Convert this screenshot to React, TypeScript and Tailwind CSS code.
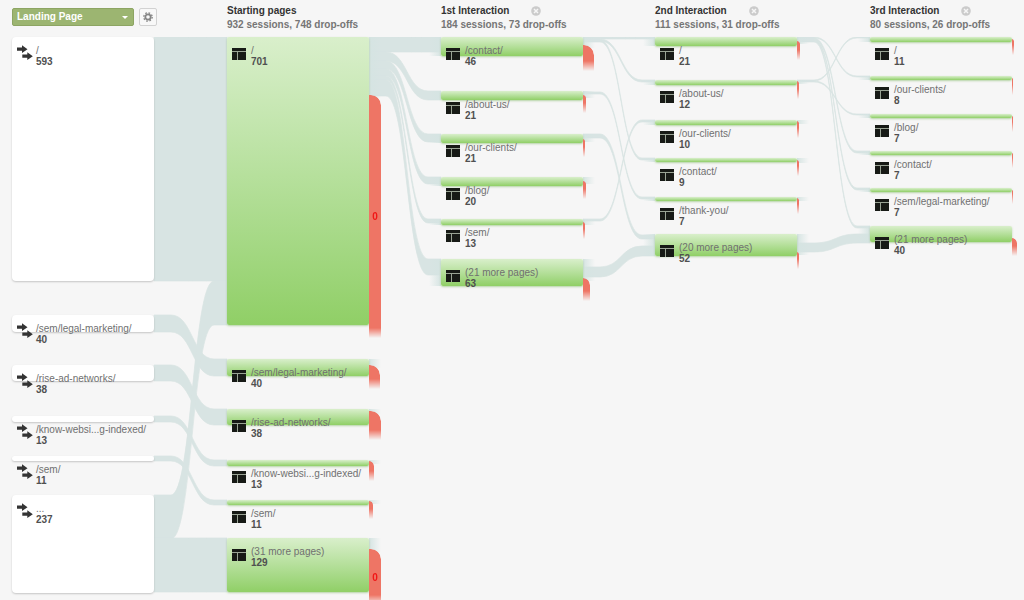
type PageNode = {
  label: string;
  count: number;
  top: number;
  height: number;
  // drop-off bar on the right edge of the node
  drop?: { top: number; width: number; height: number; text?: string };
};

type Flow = { col: number; from: number; to: number; size: number };

const NODE_WIDTH = 142;
const COLUMNS = [0, 215, 429, 643, 858];

const steps = [
  { title: "Starting pages", summary: "932 sessions, 748 drop-offs", removable: false },
  { title: "1st Interaction", summary: "184 sessions, 73 drop-offs", removable: true },
  { title: "2nd Interaction", summary: "111 sessions, 31 drop-offs", removable: true },
  { title: "3rd Interaction", summary: "80 sessions, 26 drop-offs", removable: true },
];

const landing: PageNode[] = [
  { label: "/", count: 593, top: 0, height: 244 },
  { label: "/sem/legal-marketing/", count: 40, top: 278, height: 17 },
  { label: "/rise-ad-networks/", count: 38, top: 328, height: 16 },
  { label: "/know-websi...g-indexed/", count: 13, top: 379, height: 6 },
  { label: "/sem/", count: 11, top: 419, height: 5 },
  { label: "...", count: 237, top: 458, height: 98 },
];

const pages: PageNode[][] = [
  [
    { label: "/", count: 701, top: 0, height: 288, drop: { top: 58, width: 12, height: 243, text: "0" } },
    { label: "/sem/legal-marketing/", count: 40, top: 322, height: 17, drop: { top: 328, width: 11, height: 24 } },
    { label: "/rise-ad-networks/", count: 38, top: 372, height: 16, drop: { top: 374, width: 12, height: 29 } },
    { label: "/know-websi...g-indexed/", count: 13, top: 423, height: 6, drop: { top: 424, width: 5, height: 20 } },
    { label: "/sem/", count: 11, top: 463, height: 5, drop: { top: 464, width: 4, height: 18 } },
    { label: "(31 more pages)", count: 129, top: 501, height: 54, drop: { top: 512, width: 12, height: 56, text: "0" } },
  ],
  [
    { label: "/contact/", count: 46, top: 0, height: 19, drop: { top: 8, width: 11, height: 26 } },
    { label: "/about-us/", count: 21, top: 54, height: 9, drop: { top: 58, width: 3, height: 18 } },
    { label: "/our-clients/", count: 21, top: 97, height: 9, drop: { top: 102, width: 2, height: 18 } },
    { label: "/blog/", count: 20, top: 140, height: 9, drop: { top: 144, width: 3, height: 18 } },
    { label: "/sem/", count: 13, top: 182, height: 6, drop: { top: 185, width: 2, height: 17 } },
    { label: "(21 more pages)", count: 63, top: 222, height: 27, drop: { top: 241, width: 7, height: 23 } },
  ],
  [
    { label: "/", count: 21, top: 0, height: 9, drop: { top: 4, width: 3, height: 19 } },
    { label: "/about-us/", count: 12, top: 43, height: 5, drop: { top: 44, width: 2, height: 18 } },
    { label: "/our-clients/", count: 10, top: 83, height: 5, drop: { top: 84, width: 2, height: 17 } },
    { label: "/contact/", count: 9, top: 121, height: 4, drop: { top: 123, width: 2, height: 16 } },
    { label: "/thank-you/", count: 7, top: 160, height: 4, drop: { top: 161, width: 2, height: 16 } },
    { label: "(20 more pages)", count: 52, top: 197, height: 22, drop: { top: 215, width: 2, height: 17 } },
  ],
  [
    { label: "/", count: 11, top: 0, height: 5, drop: { top: 2, width: 2, height: 16 } },
    { label: "/our-clients/", count: 8, top: 39, height: 4, drop: { top: 41, width: 1, height: 17 } },
    { label: "/blog/", count: 7, top: 77, height: 4, drop: { top: 79, width: 1, height: 16 } },
    { label: "/contact/", count: 7, top: 114, height: 4, drop: { top: 116, width: 1, height: 15 } },
    { label: "/sem/legal-marketing/", count: 7, top: 151, height: 4, drop: { top: 153, width: 1, height: 14 } },
    { label: "(21 more pages)", count: 40, top: 189, height: 16, drop: { top: 201, width: 5, height: 18 } },
  ],
];

const flows: Flow[] = [
  { col: 0, from: 0, to: 0, size: 244 },
  { col: 0, from: 278, to: 322, size: 17 },
  { col: 0, from: 328, to: 372, size: 16 },
  { col: 0, from: 379, to: 423, size: 6 },
  { col: 0, from: 419, to: 463, size: 5 },
  { col: 0, from: 458, to: 244, size: 44 },
  { col: 0, from: 501, to: 501, size: 54 },
  { col: 1, from: 0, to: 0, size: 15 },
  { col: 1, from: 15, to: 54, size: 9 },
  { col: 1, from: 24, to: 97, size: 8 },
  { col: 1, from: 32, to: 140, size: 7 },
  { col: 1, from: 39, to: 182, size: 4 },
  { col: 1, from: 43, to: 222, size: 16 },
  { col: 2, from: 0, to: 0, size: 2 },
  { col: 2, from: 2, to: 43, size: 2 },
  { col: 2, from: 3, to: 121, size: 2 },
  { col: 2, from: 55, to: 160, size: 2 },
  { col: 2, from: 97, to: 198, size: 4 },
  { col: 2, from: 182, to: 83, size: 2 },
  { col: 2, from: 230, to: 209, size: 10 },
  { col: 3, from: 0, to: 39, size: 1 },
  { col: 3, from: 1, to: 114, size: 2 },
  { col: 3, from: 2, to: 151, size: 2 },
  { col: 3, from: 3, to: 189, size: 2 },
  { col: 3, from: 43, to: 0, size: 1 },
  { col: 3, from: 44, to: 77, size: 1 },
  { col: 3, from: 206, to: 197, size: 9 },
];

function ribbon({ col, from, to, size }: Flow) {
  const x0 = COLUMNS[col] + NODE_WIDTH;
  const x1 = COLUMNS[col + 1];
  const a = x0 + 17;
  const b = x1 - 13;
  const m = (a + b) / 2;
  return `M${x0} ${from}H${a}C${m} ${from} ${m} ${to} ${b} ${to}H${x1}V${to + size}H${b}C${m} ${to + size} ${m} ${from + size} ${a} ${from + size}H${x0}Z`;
}

function PageIcon() {
  return (
    <svg className="h-3 w-[14px] shrink-0" viewBox="0 0 14 12">
      <rect width="14" height="12" fill="#9aa495" />
      <path d="M0 0h14v3H0zM0 4h5v8H0zM6 4h8v8H6z" fill="#171a16" />
    </svg>
  );
}

function EntryIcon() {
  return (
    <svg className="h-4 w-4 shrink-0" viewBox="0 0 16 16" fill="#333">
      <path d="M0 2.600h5V0.300l5.500 3.900L5 8.100V5.800H0z" />
      <path d="M5.300 9.600h5V7.300l5.500 3.900-5.500 3.900v-2.300h-5z" />
    </svg>
  );
}

function GearIcon() {
  return (
    <svg className="h-[10px] w-[10px]" viewBox="0 0 10 10" fill="none" stroke="#858585">
      <circle cx="5" cy="5" r="2.700" strokeWidth="1.800" />
      <circle cx="5" cy="5" r="4.200" strokeWidth="1.300" strokeDasharray="1.650 1.650" />
    </svg>
  );
}

function NodeText({ node }: { node: PageNode }) {
  return (
    <div className="leading-[11px]">
      <div className="text-[#707070]">{node.label}</div>
      <div className="font-bold text-[#505050]">{node.count}</div>
    </div>
  );
}

function LandingNode({ node }: { node: PageNode }) {
  return (
    <li className="absolute left-0" style={{ top: node.top, width: NODE_WIDTH }}>
      <div
        className="absolute inset-x-0 top-0 rounded-sm bg-white shadow-[0_1px_2px_rgba(0,0,0,0.2)]"
        style={{ height: node.height }}
      />
      <div className="relative flex items-start gap-[3px] whitespace-nowrap pl-[5px] pt-2">
        <EntryIcon />
        <NodeText node={node} />
      </div>
    </li>
  );
}

function GreenNode({ node, col }: { node: PageNode; col: number }) {
  const { drop } = node;
  return (
    <li className="absolute" style={{ left: COLUMNS[col], top: node.top, width: NODE_WIDTH }}>
      {col > 1 && (
        <div
          className="absolute right-full top-0 w-3 bg-gradient-to-l from-[#d5e4e2] to-transparent"
          style={{ height: node.height }}
        />
      )}
      {drop && col < 4 && (
        <div
          className="absolute left-full top-0 w-3 bg-gradient-to-r from-[#d5e4e2] to-transparent"
          style={{ height: drop.top - node.top + 3 }}
        />
      )}
      <div
        className="absolute inset-x-0 top-0 rounded-xs bg-gradient-to-b from-[#d9efcb] to-[#90cf66] shadow-[0_1px_2px_rgba(120,180,90,0.5)]"
        style={{ height: node.height }}
      />
      {drop && (
        <div
          className="absolute left-full flex items-center justify-center rounded-tr-[10px] bg-[#ee7565] font-bold text-[#f01818] mask-b-from-[calc(100%-10px)]"
          style={{ top: drop.top - node.top, width: drop.width, height: drop.height }}
        >
          {drop.text}
        </div>
      )}
      <div className="relative flex items-start gap-[5px] whitespace-nowrap pl-[5px] pt-2">
        <div className="pt-[3px]">
          <PageIcon />
        </div>
        <NodeText node={node} />
      </div>
    </li>
  );
}

export default function App() {
  return (
    <main className="h-screen overflow-hidden bg-[#f6f6f6] px-3 font-['Liberation_Sans',sans-serif] text-[10px]">
      <header className="grid h-[37px] grid-cols-[215px_214px_214px_215px_1fr] whitespace-nowrap">
        <div className="flex items-start gap-[5px] pt-2">
          <div className="relative flex">
            <select
              aria-label="Dimension"
              className="h-[18px] w-[122px] appearance-none rounded-xs border border-[#8da563] bg-[#9cb571] py-0 pl-1 font-bold leading-4 text-white"
            >
              <option>Landing Page</option>
            </select>
            <svg className="pointer-events-none absolute right-1.5 top-2 h-[3px] w-1.5" viewBox="0 0 6 3" fill="#fff">
              <path d="M0 0h6L3 3z" />
            </svg>
          </div>
          <button
            aria-label="Settings"
            className="flex h-[18px] w-[18px] items-center justify-center rounded-xs border border-[#d2d2d2] bg-[#f8f8f8]"
          >
            <GearIcon />
          </button>
        </div>
        {steps.map((step) => (
          <div key={step.title} className="pt-1 font-bold leading-[14px]">
            <div className="flex items-center gap-[22px]">
              <h2 className="text-[#333]">{step.title}</h2>
              {step.removable && (
                <button aria-label={`Remove ${step.title}`}>
                  <svg className="h-[10px] w-[10px]" viewBox="0 0 10 10">
                    <circle cx="5" cy="5" r="4.800" fill="#cbcbcb" />
                    <path d="M3 3l4 4M7 3l-4 4" stroke="#f6f6f6" strokeWidth="1.500" />
                  </svg>
                </button>
              )}
            </div>
            <p className="text-[#757575]">{step.summary}</p>
          </div>
        ))}
      </header>

      <section className="relative" aria-label="Behavior flow">
        <svg
          className="absolute left-0 top-0 h-[563px] w-[1000px]"
          viewBox="0 0 1000 563"
          fill="#d8e4e3"
          stroke="#d8e4e3"
          strokeWidth="0.700"
        >
          {flows.map((flow) => (
            <path key={`${flow.col}-${flow.from}-${flow.to}`} d={ribbon(flow)} />
          ))}
        </svg>
        <ul>
          {landing.map((node) => (
            <LandingNode key={node.label} node={node} />
          ))}
        </ul>
        {pages.map((nodes, i) => (
          <ul key={steps[i].title}>
            {nodes.map((node) => (
              <GreenNode key={node.label} node={node} col={i + 1} />
            ))}
          </ul>
        ))}
      </section>
    </main>
  );
}
